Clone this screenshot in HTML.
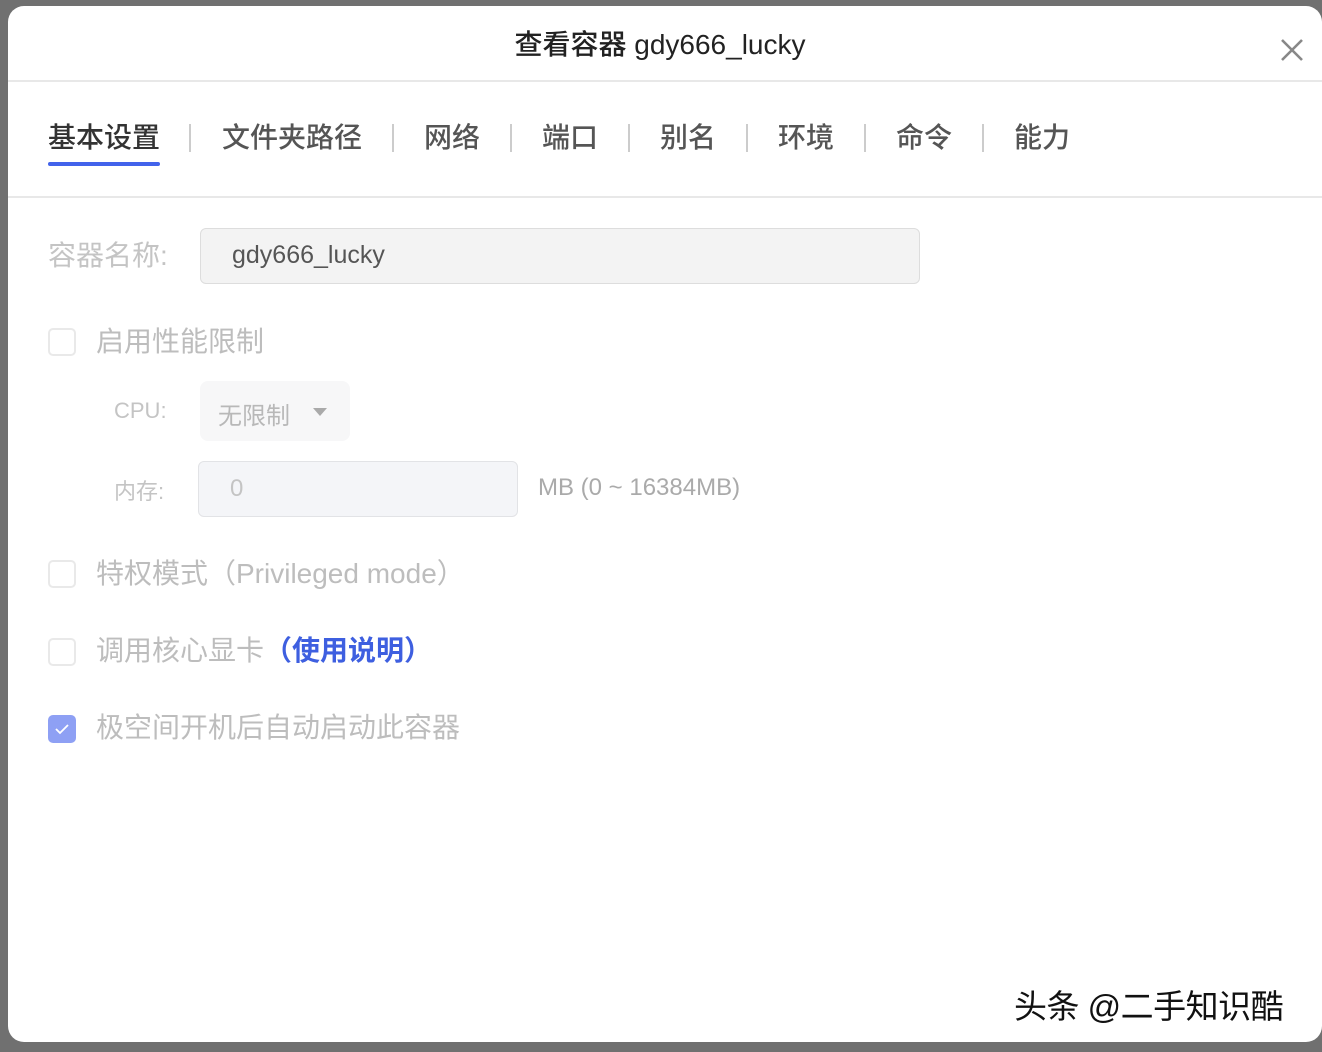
<!DOCTYPE html>
<html><head><meta charset="utf-8"><style>
*{margin:0;padding:0;box-sizing:border-box}
body{width:1322px;height:1052px;background:#707070;overflow:hidden;position:relative;font-family:"Liberation Sans","Noto Sans CJK SC",sans-serif}
.modal{position:absolute;left:8px;top:6px;width:1314px;height:1036px;background:#fff;border-radius:16px;overflow:hidden}
.a{position:absolute;white-space:nowrap}
.title{left:-5px;width:1314px;text-align:center;top:17px;font-size:28px;color:#222;font-weight:500}
.hr{position:absolute;left:0;width:1314px;height:2px;background:#e8e8e8}
.tab{top:112px;font-size:28px;color:#555;font-weight:500;line-height:40px}
.sep{top:118px;width:2px;height:28px;background:#ccc}
.cb{position:absolute;left:40px;width:28px;height:28px;border:2px solid #e9e9e9;border-radius:5px}
.lbl{font-size:28px;color:#bdbdbd;line-height:36px}
</style></head><body>
<div class="modal">
<div class="a title">查看容器 gdy666_lucky</div>
<svg class="a" style="left:1272px;top:32px" width="24" height="24" viewBox="0 0 24 24"><path d="M2 2L22 22M22 2L2 22" stroke="#888" stroke-width="2.6"/></svg>
<div class="hr" style="top:74px"></div>
<div class="a tab" style="left:40px;color:#333">基本设置</div>
<div class="a" style="left:40px;top:156px;width:112px;height:4px;background:#4263eb;border-radius:2px"></div>
<div class="a sep" style="left:181px"></div>
<div class="a tab" style="left:214px">文件夹路径</div>
<div class="a sep" style="left:384px"></div>
<div class="a tab" style="left:416px">网络</div>
<div class="a sep" style="left:502px"></div>
<div class="a tab" style="left:534px">端口</div>
<div class="a sep" style="left:620px"></div>
<div class="a tab" style="left:652px">别名</div>
<div class="a sep" style="left:738px"></div>
<div class="a tab" style="left:770px">环境</div>
<div class="a sep" style="left:856px"></div>
<div class="a tab" style="left:888px">命令</div>
<div class="a sep" style="left:974px"></div>
<div class="a tab" style="left:1006px">能力</div>
<div class="hr" style="top:190px"></div>

<div class="a lbl" style="left:40px;top:232px;color:#c4c4c4">容器名称:</div>
<div class="a" style="left:192px;top:222px;width:720px;height:56px;background:#f3f3f3;border:1.5px solid #ddd;border-radius:6px;font-size:25px;color:#555;padding:12px 0 0 31px">gdy666_lucky</div>

<div class="cb" style="top:322px"></div>
<div class="a lbl" style="left:88px;top:318px">启用性能限制</div>

<div class="a" style="left:106px;top:392px;font-size:22px;color:#c4c4c4">CPU:</div>
<div class="a" style="left:192px;top:375px;width:150px;height:60px;background:#f7f7f8;border-radius:8px"></div>
<div class="a" style="left:210px;top:390px;font-size:24px;color:#b8b8b8">无限制</div>
<svg class="a" style="left:304px;top:400px" width="16" height="12" viewBox="0 0 16 12"><path d="M1 2h14L8 10z" fill="#aaa"/></svg>

<div class="a" style="left:106px;top:468px;font-size:22px;color:#c4c4c4">内存:</div>
<div class="a" style="left:190px;top:455px;width:320px;height:56px;background:#f4f5f8;border:1.5px solid #e2e3e6;border-radius:6px;font-size:24px;color:#c4c4c4;padding:13px 0 0 31px">0</div>
<div class="a" style="left:530px;top:468px;font-size:24px;color:#aaa">MB (0 ~ 16384MB)</div>

<div class="cb" style="top:554px"></div>
<div class="a lbl" style="left:88px;top:550px">特权模式（Privileged mode）</div>

<div class="cb" style="top:632px"></div>
<div class="a lbl" style="left:88px;top:627px">调用核心显卡<span style="color:#3e5fe0;font-weight:bold">（使用说明）</span></div>

<div class="a" style="left:40px;top:709px;width:28px;height:28px;background:#8ea0f4;border-radius:5px"></div>
<svg class="a" style="left:46px;top:716px" width="16" height="14" viewBox="0 0 16 14"><path d="M2 7l4 4 8-8" stroke="#fff" stroke-width="1.8" fill="none"/></svg>
<div class="a lbl" style="left:88px;top:704px">极空间开机后自动启动此容器</div>

<div class="a" style="left:1006px;top:974px;font-size:33px;letter-spacing:-0.5px;color:#111;text-shadow:1px 1px 0 #fff,-1px -1px 0 #fff">头条 @二手知识酷</div>
</div>
</body></html>
